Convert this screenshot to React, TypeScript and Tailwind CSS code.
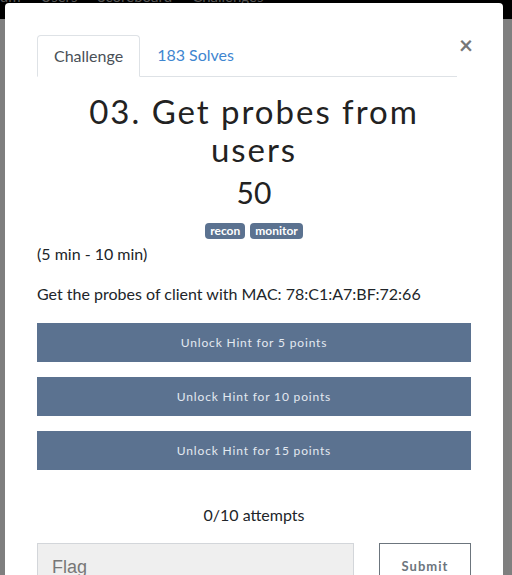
import React from 'react';

const HINTS = [5, 10, 15];

export default function App() {
  return (
    <div className="relative h-[575px] w-[512px] overflow-hidden bg-white font-['Lato','Liberation_Sans',sans-serif] text-[#212529]">
      {/* page navbar behind the modal */}
      <nav className="h-[30px] bg-black">
        <div className="flex items-start gap-[20px] -mt-[11px] text-[15px] leading-none text-[#aaa]">
          <span className="-ml-[22px]">Forum</span>
          <span>Users</span>
          <span>Scoreboard</span>
          <span>Challenges</span>
        </div>
      </nav>

      {/* backdrop */}
      <div className="absolute inset-0 bg-black/50" />

      {/* modal */}
      <div className="absolute left-[5px] top-[3px] w-[498px] rounded-sm bg-white px-8 pt-8 pb-8">
        <div className="flex items-start">
          <ul className="flex flex-1 border-b border-[#dee2e6] text-[16px]">
            <li className="-mb-px h-[42px] rounded-t-[4px] border border-b-white border-[#dee2e6] px-[16px] pt-[8px] text-[#495057]">
              Challenge
            </li>
            <li className="h-[41px] px-[17px] pt-[8px] text-[#3f86d0]">183 Solves</li>
          </ul>
          <button className="ml-[2px] -mt-[2px] w-[12px] text-[24px] font-bold leading-none text-[#777]">
            ×
          </button>
        </div>

        <h1 className="mt-[15px] px-[20px] text-center text-[33px] font-normal leading-[38px] tracking-[0.06em] text-[#222]">
          03. Get probes from users
        </h1>
        <div className="mt-[6px] text-center text-[30px] leading-[36px] text-[#222]">50</div>

        <div className="mt-[13px] flex justify-center gap-[5px]">
          <span className="rounded-[4px] bg-[#5b7290] px-[5px] text-[12px] font-bold leading-[16px] text-white">recon</span>
          <span className="rounded-[4px] bg-[#5b7290] px-[5px] text-[12px] font-bold leading-[16px] text-white">monitor</span>
        </div>

        <p className="mt-[3px] text-[16px] leading-[24px]">(5 min - 10 min)</p>
        <p className="mt-[16px] text-[16px] leading-[24px]">
          Get the probes of client with MAC: 78:C1:A7:BF:72:66
        </p>

        <div className="mt-[17px] flex flex-col gap-[15px]">
          {HINTS.map((p) => (
            <button
              key={p}
              className="h-[39px] w-full bg-[#5b7290] text-[12px] tracking-[0.07em] text-[#e3e9f0]"
            >
              Unlock Hint for {p} points
            </button>
          ))}
        </div>

        <p className="mt-[33px] text-center text-[16px] leading-[24px]">0/10 attempts</p>

        <div className="mt-[16px] flex gap-[25px]">
          <input
            placeholder="Flag"
            className="h-[48px] w-[317px] border border-[#d3d6da] bg-[#efefef] px-[14px] font-['Liberation_Sans',sans-serif] text-[18px] placeholder:text-[#777]"
          />
          <button className="h-[48px] w-[92px] border border-[#6c757d] text-[13px] font-bold tracking-[0.08em] text-[#6c757d]">
            Submit
          </button>
        </div>
      </div>
    </div>
  );
}
